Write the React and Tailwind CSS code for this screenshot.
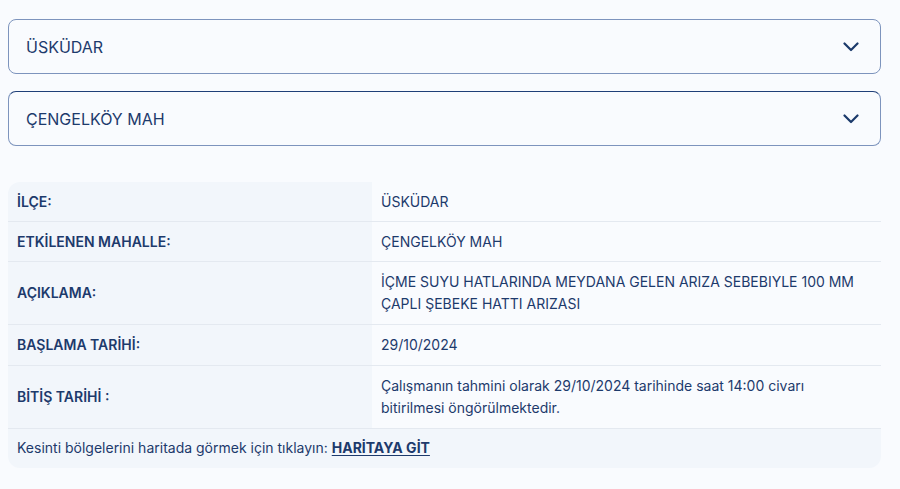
import React from "react";

function Chevron() {
  return (
    <svg width="16" height="10" viewBox="0 0 16 10" fill="none" className="shrink-0">
      <polyline points="1.5,1.5 8,8 14.5,1.5" stroke="#1b3a6b" strokeWidth="2.2" strokeLinecap="round" strokeLinejoin="round" />
    </svg>
  );
}

function Select({ value, focused }) {
  return (
    <div
      className={
        "flex items-center justify-between h-[55px] rounded-[8px] border border-[#7d94bd] bg-[#f9fbfe] pl-[17px] pr-[21px] " +
        (focused ? "border-t-[#1f3f78]" : "")
      }
    >
      <span className="text-[16px] text-[#1d3a6c]">{value}</span>
      <Chevron />
    </div>
  );
}

function Row({ label, children, tight }) {
  const pad = tight ? "pt-[9px] pb-[8px]" : "py-[9px]";
  return (
    <div className="flex border-b border-[#e4e9f0]">
      <div className={"w-[364px] shrink-0 bg-[#f2f6fb] pl-[9px] flex items-center font-semibold text-[#1d3a6c] leading-[22px] " + pad}>
        {label}
      </div>
      <div className={"flex-1 bg-[#f9fbfe] pl-[9px] flex items-center text-[#1d3a6c] leading-[22px] " + pad}>
        <div>{children}</div>
      </div>
    </div>
  );
}

export default function App() {
  return (
    <div
      className="min-h-[489px] w-[900px] bg-[#f9fbfe] pt-[19px] pl-[8px] pr-[19px]"
      style={{ fontFamily: "Inter, 'Noto Sans', sans-serif" }}
    >
      <div className="flex flex-col gap-[17px]">
        <Select value="ÜSKÜDAR" />
        <Select value="ÇENGELKÖY MAH" focused />
      </div>
      <div className="mt-[36px] rounded-[12px] overflow-hidden text-[14px]">
        <Row label="İLÇE:" tight>ÜSKÜDAR</Row>
        <Row label="ETKİLENEN MAHALLE:" tight>ÇENGELKÖY MAH</Row>
        <Row label="AÇIKLAMA:">
          İÇME SUYU HATLARINDA MEYDANA GELEN ARIZA SEBEBIYLE 100 MM
          <br />
          ÇAPLI ŞEBEKE HATTI ARIZASI
        </Row>
        <Row label="BAŞLAMA TARİHİ:">29/10/2024</Row>
        <Row label="BİTİŞ TARİHİ :">
          Çalışmanın tahmini olarak 29/10/2024 tarihinde saat 14:00 civarı
          <br />
          bitirilmesi öngörülmektedir.
        </Row>
        <div className="bg-[#f2f6fb] pl-[9px] pt-[8px] pb-[9px] leading-[22px] text-[#1d3a6c]">
          Kesinti bölgelerini haritada görmek için tıklayın:{" "}
          <a className="font-bold underline underline-offset-2">HARİTAYA GİT</a>
        </div>
      </div>
    </div>
  );
}
